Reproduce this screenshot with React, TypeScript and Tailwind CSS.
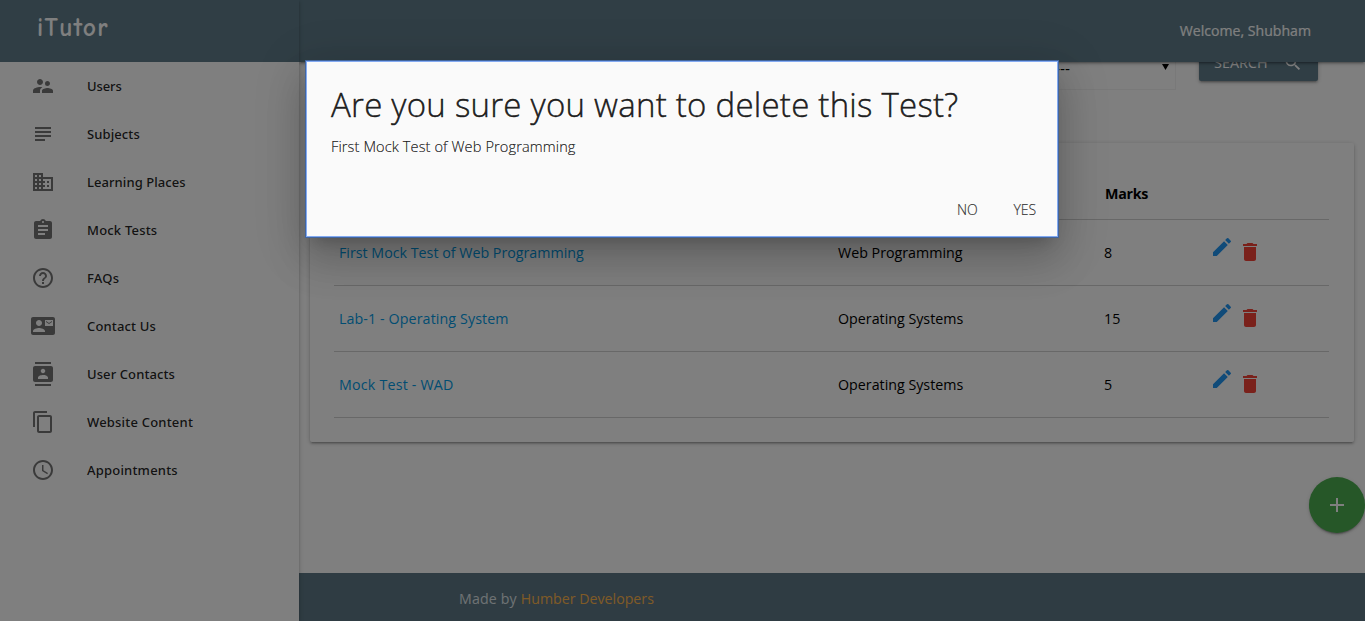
import type { ReactNode } from 'react';
import type { IconType } from 'react-icons';
import {
  MdAccessTime,
  MdAdd,
  MdAssignment,
  MdBusiness,
  MdContactMail,
  MdContacts,
  MdContentCopy,
  MdDelete,
  MdEdit,
  MdHelpOutline,
  MdSearch,
  MdSubject,
  MdSupervisorAccount,
} from 'react-icons/md';

const menu: { label: string; icon: IconType; track: string }[] = [
  { label: 'Users', icon: MdSupervisorAccount, track: 'tracking-[-0.1px]' },
  { label: 'Subjects', icon: MdSubject, track: 'tracking-[0.1px]' },
  { label: 'Learning Places', icon: MdBusiness, track: 'tracking-[0.07px]' },
  { label: 'Mock Tests', icon: MdAssignment, track: 'tracking-[0.2px]' },
  { label: 'FAQs', icon: MdHelpOutline, track: 'tracking-[0.2px]' },
  { label: 'Contact Us', icon: MdContactMail, track: 'tracking-[0.15px]' },
  { label: 'User Contacts', icon: MdContacts, track: 'tracking-[0.1px]' },
  { label: 'Website Content', icon: MdContentCopy, track: 'tracking-[0.2px]' },
  { label: 'Appointments', icon: MdAccessTime, track: 'tracking-[0.2px]' },
];

const tests = [
  { name: 'First Mock Test of Web Programming', subject: 'Web Programming', marks: 8, track: 'tracking-[0px]' },
  { name: 'Lab-1 - Operating System', subject: 'Operating Systems', marks: 15, track: 'tracking-[0.1px]' },
  { name: 'Mock Test - WAD', subject: 'Operating Systems', marks: 5, track: 'tracking-[0.2px]' },
];

function Sidebar() {
  return (
    <aside className="relative z-20 flex w-[299px] shrink-0 flex-col bg-white shadow-[0_2px_2px_0_rgba(0,0,0,0.14),0_3px_1px_-2px_rgba(0,0,0,0.12),0_1px_5px_0_rgba(0,0,0,0.2)]">
      <div className="flex h-[62px] items-center bg-[#607d8b] pb-[5px] pl-[37px] font-['Comic_Neue','Comic_Sans_MS','Lato',sans-serif] text-[25.5px] font-bold tracking-[1.3px] text-white">
        iTutor
      </div>
      <ul>
        {menu.map(({ label, icon: Icon, track }) => (
          <li key={label} className="flex h-12 items-center gap-8 pl-[31px]">
            <Icon className="size-6 text-black/54" />
            <span
              className={`pt-[2px] font-['Noto_Sans',sans-serif] text-[13px] font-medium text-black/87 ${track}`}
            >
              {label}
            </span>
          </li>
        ))}
      </ul>
    </aside>
  );
}

function TopBar() {
  return (
    <header className="relative z-10 flex h-[62px] shrink-0 items-center justify-end bg-[#607d8b] pr-[54px] pb-px text-[14.1px] text-white shadow-[0_2px_2px_0_rgba(0,0,0,0.14),0_3px_1px_-2px_rgba(0,0,0,0.12),0_1px_5px_0_rgba(0,0,0,0.2)] [-webkit-text-stroke:0.2px]">
      Welcome, Shubham
    </header>
  );
}

function SearchBar() {
  return (
    <div className="-mt-[18px] flex h-[46px] shrink-0 items-start justify-end gap-[23px] pr-[47px]">
      <div className="flex h-[46px] w-[420px] items-center justify-end gap-[92px] border border-[#f2f2f2] pr-[6px] font-['Liberation_Sans',sans-serif] text-[15px] text-black">
        <span className="mt-1">---Select Subject---</span>
        <svg viewBox="0 0 7 6" className="h-[6px] w-[7px]">
          <path d="M0 0h7L3.5 6z" fill="currentColor" />
        </svg>
      </div>
      <button className="mt-px flex h-9 w-[119px] items-center rounded-[2px] bg-[#607d8b] pl-[15px] text-[14.4px] text-white shadow-[0_2px_2px_0_rgba(0,0,0,0.14),0_3px_1px_-2px_rgba(0,0,0,0.12),0_1px_5px_0_rgba(0,0,0,0.2)]">
        <span className="w-[69px] text-left">SEARCH</span>
        <MdSearch className="size-5" />
      </button>
    </div>
  );
}

function Row({ children, head }: { children: ReactNode; head?: boolean }) {
  return (
    <div
      className={`grid grid-cols-[499px_266px_106px_1fr] items-center border-b border-[#d0d0d0] pl-[5px] ${head ? 'h-[53px] pt-[2px]' : 'h-[66px]'}`}
    >
      {children}
    </div>
  );
}

function TestTable() {
  return (
    <section className="mt-[53px] mr-[11px] ml-[11px] h-[299px] shrink-0 rounded-[2px] bg-white pt-6 pr-[25px] pl-6 text-[14.25px] text-black shadow-[0_2px_2px_0_rgba(0,0,0,0.14),0_3px_1px_-2px_rgba(0,0,0,0.12),0_1px_5px_0_rgba(0,0,0,0.2)]">
      <Row head>
        <span className="font-bold">Title</span>
        <span className="font-bold">Subject</span>
        <span className="pl-px font-bold tracking-[-0.25px]">Marks</span>
      </Row>
      {tests.map((t) => (
        <Row key={t.name}>
          <a className={`text-[#039be5] ${t.track}`}>{t.name}</a>
          <span>{t.subject}</span>
          <span>{t.marks}</span>
          <span className="flex gap-1">
            <MdEdit className="mb-[12px] size-6 text-[#2196f3]" />
            <MdDelete className="mt-[5px] size-6 text-[#f44336]" />
          </span>
        </Row>
      ))}
    </section>
  );
}

function Modal() {
  return (
    <div className="absolute inset-0 z-30 flex items-start bg-black/50 pt-[62px] pl-[307px]">
      <div className="flex h-[174px] w-[750px] flex-col bg-[#fafafa] px-6 pt-6 shadow-[0_0_0_2px_#41659f,0_24px_38px_3px_rgba(0,0,0,0.14),0_9px_46px_8px_rgba(0,0,0,0.12),0_11px_15px_-7px_rgba(0,0,0,0.2)] outline-1 outline-[#83aaf2]">
        <h4 className="text-[33px] leading-[38px] font-light tracking-[0.25px] whitespace-nowrap text-black/87 [-webkit-text-stroke:0.45px]">
          Are you sure you want to delete this Test?
        </h4>
        <p className="mt-[11px] text-[14.6px] leading-[23px] font-light tracking-[0.1px] text-black/87 [-webkit-text-stroke:0.2px]">
          First Mock Test of Web Programming
        </p>
        <div className="-mr-[3px] mt-auto flex h-[54px] items-center justify-end gap-9 text-[14px] font-light tracking-[-0.1px] text-[#343434] [-webkit-text-stroke:0.15px]">
          <button>NO</button>
          <button>YES</button>
        </div>
      </div>
    </div>
  );
}

export default function App() {
  return (
    <div className="relative flex h-[621px] w-[1365px] overflow-hidden bg-white font-['Open_Sans',sans-serif]">
      <Sidebar />
      <main className="flex min-w-0 flex-1 flex-col">
        <TopBar />
        <SearchBar />
        <TestTable />
        <footer className="mt-auto flex h-12 items-center gap-1 bg-[#5e7886] pt-[3px] pl-[160px] text-[14.2px]">
          <span className="tracking-[0.15px] text-[#dfe5e8]">Made by</span>
          <a className="text-[#ffb74d]">Humber Developers</a>
        </footer>
      </main>
      <button className="absolute top-[477px] right-0 flex size-14 items-center justify-center rounded-full bg-[#4caf50] text-white shadow-[0_2px_2px_0_rgba(0,0,0,0.14),0_1px_5px_0_rgba(0,0,0,0.12),0_3px_1px_-2px_rgba(0,0,0,0.2)]">
        <MdAdd className="size-6" />
      </button>
      <Modal />
    </div>
  );
}
